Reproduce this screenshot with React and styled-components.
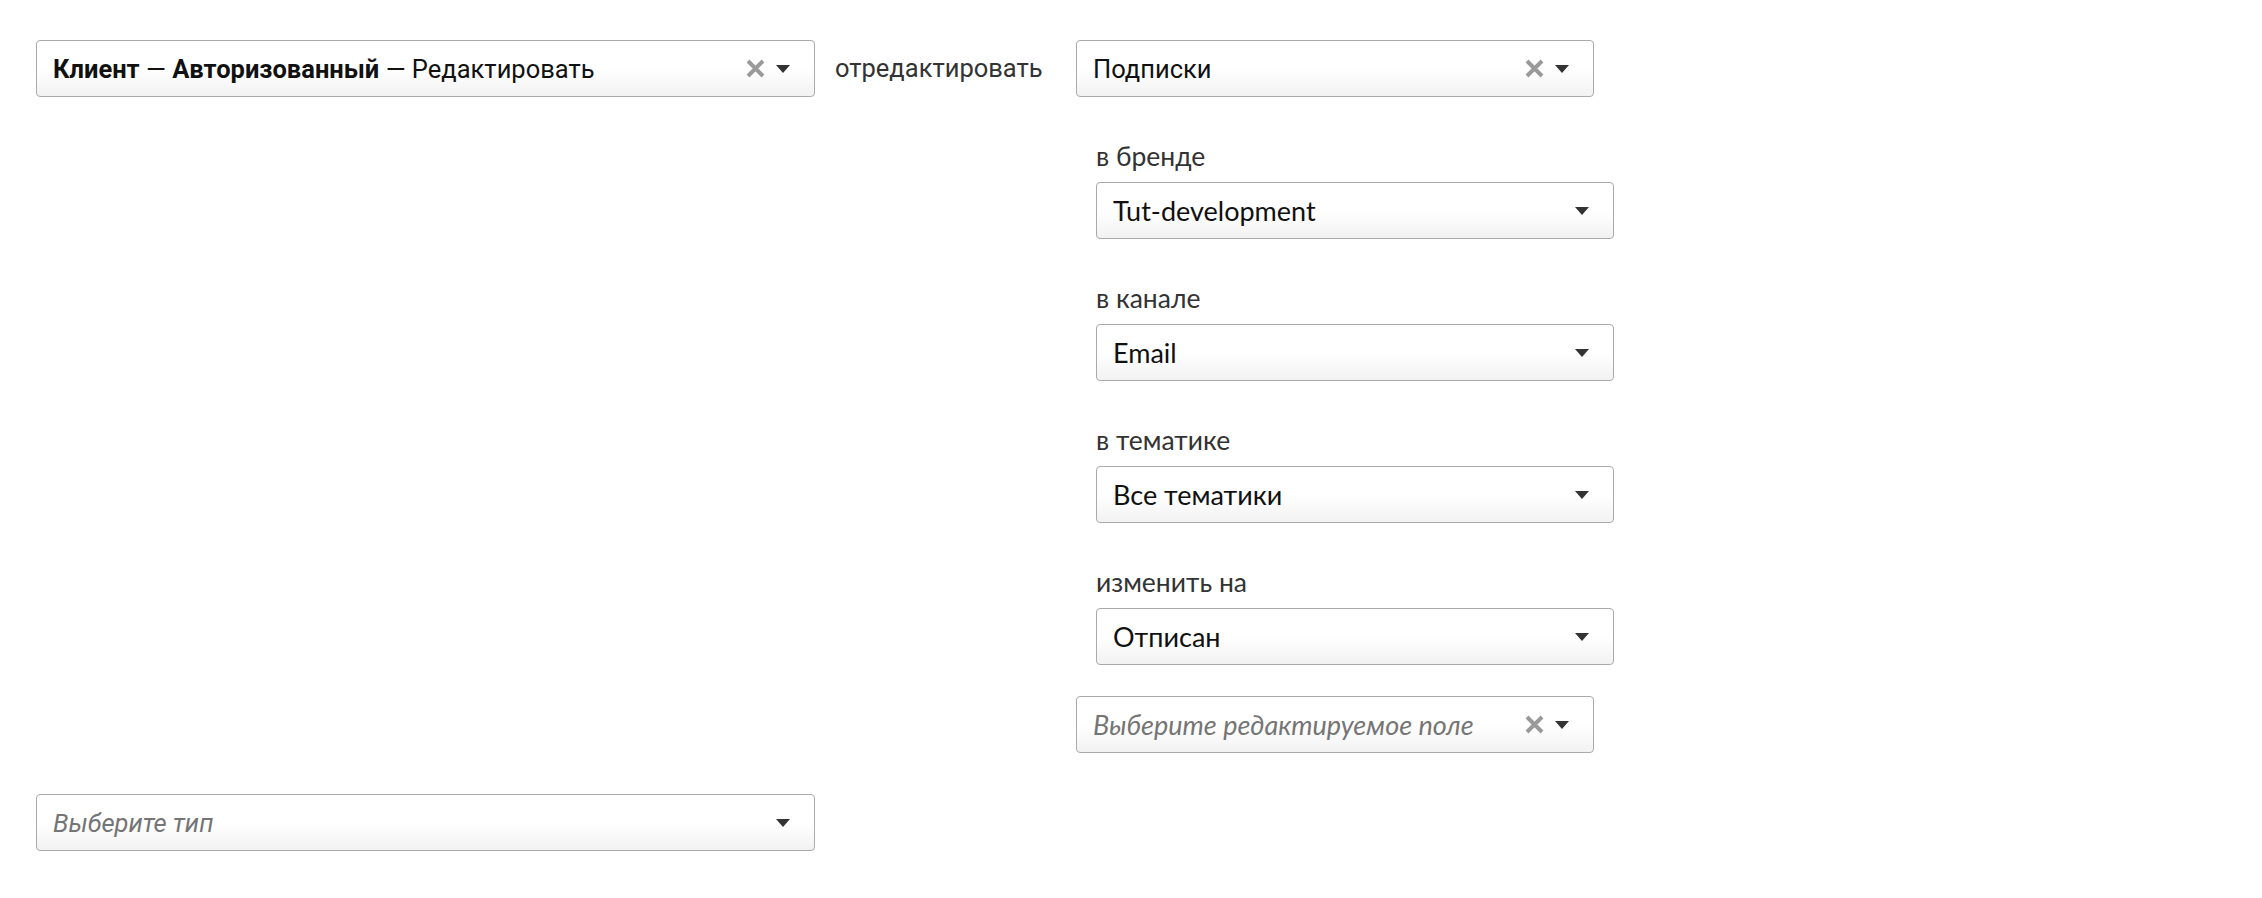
import styled, { createGlobalStyle } from "styled-components";

const GlobalStyle = createGlobalStyle`
  body {
    margin: 0;
    background: #ffffff;
    font-family: "Lato", "Noto Sans", sans-serif;
    color: #222;
  }
`;

const Page = styled.div`
  padding: 40px 0 40px 36px;
`;

const Rule = styled.div`
  display: flex;
  align-items: flex-start;
`;

const Connector = styled.div`
  box-sizing: border-box;
  width: 261px;
  padding-left: 20px;
  line-height: 57px;
  font-family: "Roboto", "Noto Sans", sans-serif;
  font-size: 25.5px;
  color: #333;
`;

const Column = styled.div`
  display: flex;
  flex-direction: column;
`;

const Nested = styled.div`
  display: flex;
  flex-direction: column;
  padding-left: 20px;
  margin-bottom: 31px;
`;

const FieldWrap = styled.div`
  display: flex;
  flex-direction: column;
  margin-top: 43px;
`;

const Label = styled.div`
  line-height: 32px;
  margin-bottom: 10px;
  font-size: 26.5px;
  color: #333;
`;

const Box = styled.div`
  box-sizing: border-box;
  display: flex;
  align-items: center;
  width: ${(p) => p.$width}px;
  height: 57px;
  margin-top: ${(p) => p.$top || 0}px;
  padding: 0 24px 0 16px;
  border: 1px solid #aaaaaa;
  border-radius: 4px;
  background: linear-gradient(to bottom, #ffffff 50%, #f2f2f2 100%);
`;

const Value = styled.div`
  flex: 1;
  overflow: hidden;
  white-space: nowrap;
  font-family: ${(p) =>
    p.$condensed ? '"Roboto", "Noto Sans", sans-serif' : '"Lato", "Noto Sans", sans-serif'};
  font-size: ${(p) => (p.$condensed ? 25.5 : 27)}px;
  color: ${(p) => (p.$placeholder ? "#757575" : "#111")};
  font-style: ${(p) => (p.$placeholder ? "italic" : "normal")};

  b {
    font-weight: 700;
  }
`;

const ClearIcon = styled.svg`
  width: 19px;
  height: 19px;
  margin-right: 11px;
  flex-shrink: 0;
`;

const ArrowIcon = styled.svg`
  width: 14px;
  height: 8px;
  flex-shrink: 0;
`;

const Select = ({ width = 518, value, placeholder, clearable, condensed, top }) => (
  <Box $width={width} $top={top}>
    <Value $condensed={condensed} $placeholder={!value}>
      {value || placeholder}
    </Value>
    {clearable && (
      <ClearIcon viewBox="0 0 19 19">
        <path d="M2 2 L17 17 M17 2 L2 17" stroke="#9a9a9a" strokeWidth="4" />
      </ClearIcon>
    )}
    <ArrowIcon viewBox="0 0 14 8">
      <path d="M0 0 H14 L7 8 Z" fill="#333" />
    </ArrowIcon>
  </Box>
);

const Field = ({ label, value }) => (
  <FieldWrap>
    <Label>{label}</Label>
    <Select value={value} />
  </FieldWrap>
);

const fields = [
  { label: "в бренде", value: "Tut-development" },
  { label: "в канале", value: "Email" },
  { label: "в тематике", value: "Все тематики" },
  { label: "изменить на", value: "Отписан" },
];

export default function App() {
  return (
    <>
      <GlobalStyle />
      <Page>
        <Rule>
          <Select
            width={779}
            condensed
            clearable
            value={
              <>
                <b>Клиент</b> — <b>Авторизованный</b> — Редактировать
              </>
            }
          />
          <Connector>отредактировать</Connector>
          <Column>
            <Select condensed clearable value="Подписки" />
            <Nested>
              {fields.map((f) => (
                <Field key={f.label} label={f.label} value={f.value} />
              ))}
            </Nested>
            <Select clearable placeholder="Выберите редактируемое поле" />
          </Column>
        </Rule>
        <Select width={779} condensed top={41} placeholder="Выберите тип" />
      </Page>
    </>
  );
}
